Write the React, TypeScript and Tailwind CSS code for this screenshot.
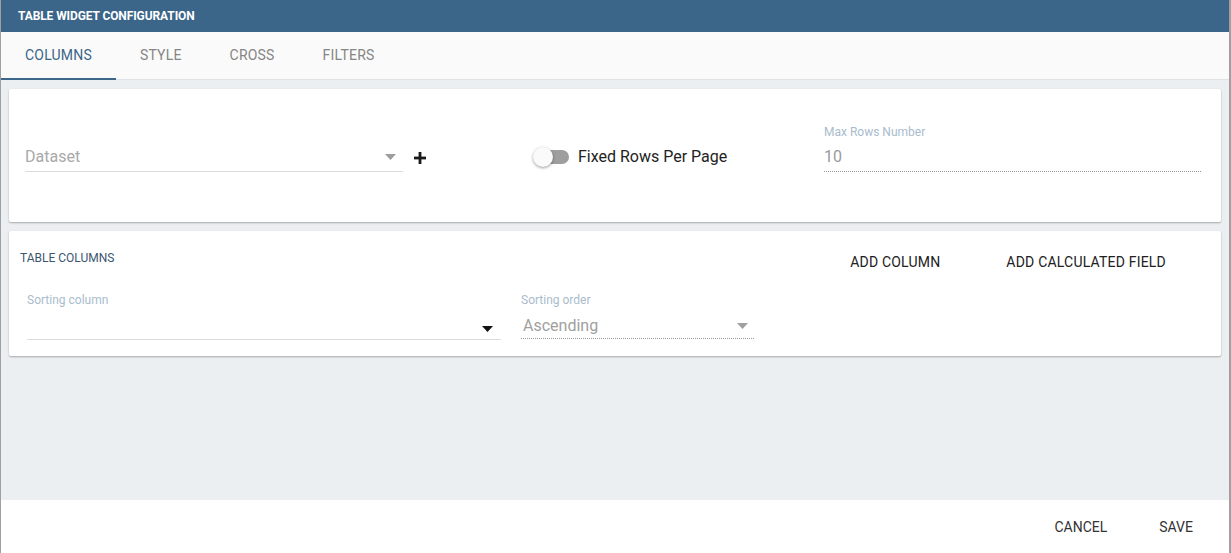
import React from 'react';

const tabs = ['COLUMNS', 'STYLE', 'CROSS', 'FILTERS'];

const Caret: React.FC<{ className?: string }> = ({ className }) => (
  <svg width="11" height="6" viewBox="0 0 11 6" className={className}>
    <path d="M0 0 L11 0 L5.5 6 Z" fill="currentColor" />
  </svg>
);

const App: React.FC = () => {
  return (
    <div
      className="w-[1231px] h-[553px] flex flex-col bg-white border-l border-r-2 border-[#a0a0a0] overflow-hidden"
      style={{ fontFamily: 'Roboto, "Liberation Sans", sans-serif' }}
    >
      {/* Header */}
      <div className="h-[32px] shrink-0 bg-[#3b6589] flex items-center pl-[17px]">
        <span className="text-white text-[12px] font-bold tracking-[-0.1px]">TABLE WIDGET CONFIGURATION</span>
      </div>

      {/* Tabs */}
      <div className="h-[48px] shrink-0 bg-[#fafafa] border-b border-[#e0e3e6] flex">
        {tabs.map((t, i) => (
          <div
            key={t}
            className={`relative px-6 flex items-center text-[14px] tracking-[0.2px] ${i === 0 ? 'text-[#3b6589]' : 'text-[#858585]'}`}
          >
            {t}
            {i === 0 && <div className="absolute left-0 right-0 bottom-[-1px] h-[2px] bg-[#3b6589]" />}
          </div>
        ))}
      </div>

      {/* Body */}
      <div className="flex-1 bg-[#eceff1] pl-[8px] pr-[8px] pt-[9px] flex flex-col gap-[9px]">
        {/* Card 1 */}
        <div className="h-[133px] bg-white rounded-[2px] shadow-[0_1px_2px_rgba(0,0,0,0.3)] flex items-center pl-[16px] pr-[20px]">
          <div className="w-[378px] h-[32px] border-b border-[#dcdcdc] flex items-center justify-between pr-[7px] pt-[3px]">
            <span className="text-[16px] text-[#a9a9a9]">Dataset</span>
            <Caret className="text-[#9e9e9e]" />
          </div>
          <svg width="12" height="12" viewBox="0 0 12 12" className="ml-[11px] mt-[5px]">
            <rect x="4.6" y="0" width="2.8" height="12" fill="#1a1a1a" />
            <rect x="0" y="4.6" width="12" height="2.8" fill="#1a1a1a" />
          </svg>
          <div className="ml-[107px] flex items-center pt-[2px]">
            <div className="relative w-[36px] h-[20px] flex items-center">
              <div className="absolute left-[2px] right-0 h-[14px] rounded-full bg-[#9e9e9e]" />
              <div className="absolute left-0 w-[20px] h-[20px] rounded-full bg-[#fafafa] shadow-[0_1px_3px_rgba(0,0,0,0.4)]" />
            </div>
            <span className="ml-[9px] text-[16px] text-[#222]">Fixed Rows Per Page</span>
          </div>
          <div className="ml-auto w-[377px] flex flex-col mb-[14px]">
            <span className="text-[12px] text-[#a9bccd] leading-[14px]">Max Rows Number</span>
            <span className="mt-[7px] text-[16px] text-[#9a9a9a] leading-[22px]">10</span>
            <div className="mt-[3px] border-b border-dotted border-[#9a9a9a]" />
          </div>
        </div>

        {/* Card 2 */}
        <div className="h-[125px] bg-white rounded-[2px] shadow-[0_1px_2px_rgba(0,0,0,0.3)] flex flex-col pl-[11px] pr-[55px]">
          <div className="flex items-center h-[52px] pt-[1px]">
            <span className="text-[12px] text-[#3b5670]">TABLE COLUMNS</span>
            <span className="ml-auto text-[14px] tracking-[0.2px] text-[#212121] mt-[10px]">ADD COLUMN</span>
            <span className="ml-[66px] text-[14px] tracking-[0.2px] text-[#212121] mt-[10px]">ADD CALCULATED FIELD</span>
          </div>
          <div className="flex items-start pt-[10px]">
            <div className="ml-[7px] w-[474px] flex flex-col">
              <span className="text-[12px] text-[#a9bccd] leading-[14px]">Sorting column</span>
              <div className="h-[32px] flex items-center justify-end pr-[8px] pt-[12px]">
                <Caret className="text-[#111]" />
              </div>
              <div className="border-b border-[#dcdcdc]" />
            </div>
            <div className="ml-[20px] w-[233px] flex flex-col">
              <span className="text-[12px] text-[#a9bccd] leading-[14px]">Sorting order</span>
              <div className="h-[31px] flex items-center justify-between pl-[2px] pr-[6px] pt-[7px]">
                <span className="text-[16px] text-[#a0a0a0]">Ascending</span>
                <Caret className="text-[#a0a0a0]" />
              </div>
              <div className="border-b border-dotted border-[#9a9a9a]" />
            </div>
          </div>
        </div>
      </div>

      {/* Footer */}
      <div className="h-[53px] shrink-0 bg-white flex items-center justify-end pr-[36px] pt-[2px]">
        <span className="text-[14px] text-[#333]">CANCEL</span>
        <span className="ml-[52px] text-[14px] text-[#333]">SAVE</span>
      </div>
    </div>
  );
};

export default App;
